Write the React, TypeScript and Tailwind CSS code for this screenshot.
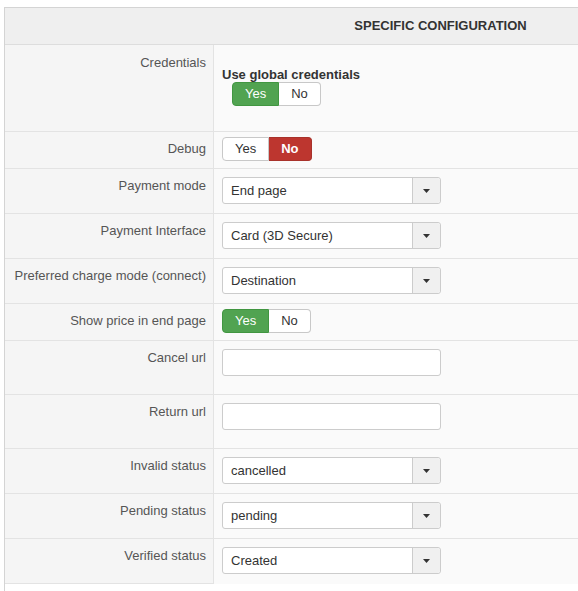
import React from "react";

type Field =
  | { kind: "toggle"; label: string; value: boolean }
  | { kind: "select"; label: string; value: string }
  | { kind: "input"; label: string };

const fields: Field[] = [
  { kind: "toggle", label: "Debug", value: false },
  { kind: "select", label: "Payment mode", value: "End page" },
  { kind: "select", label: "Payment Interface", value: "Card (3D Secure)" },
  { kind: "select", label: "Preferred charge mode (connect)", value: "Destination" },
  { kind: "toggle", label: "Show price in end page", value: true },
  { kind: "input", label: "Cancel url" },
  { kind: "input", label: "Return url" },
  { kind: "select", label: "Invalid status", value: "cancelled" },
  { kind: "select", label: "Pending status", value: "pending" },
  { kind: "select", label: "Verified status", value: "Created" },
];

function YesNo({ on }: { on: boolean }) {
  return (
    <div className="flex w-max text-[13px] leading-[22px]">
      <span
        className={`px-3 rounded-l-[4px] border ${
          on ? "bg-[#51a351] border-[#419641] text-white" : "bg-white border-[#c8c8c8] text-[#333]"
        }`}
      >
        Yes
      </span>
      <span
        className={`px-3 rounded-r-[4px] border border-l-0 ${
          !on ? "bg-[#bd362f] border-[#a8322b] text-white font-bold" : "bg-white border-[#c8c8c8] text-[#333]"
        }`}
      >
        No
      </span>
    </div>
  );
}

function Dropdown({ value }: { value: string }) {
  return (
    <div className="flex w-[219px] h-[27px] bg-white border border-[#cccccc] rounded-[3px] text-[13px] text-[#333]">
      <span className="flex-1 pl-2 leading-[26px]">{value}</span>
      <span className="w-[28px] flex items-center justify-center bg-[#f0f0f0] border-l border-[#cccccc] rounded-r-[3px]">
        <svg width="7" height="4" viewBox="0 0 7 4">
          <path d="M0 0h7L3.5 4z" fill="#333" />
        </svg>
      </span>
    </div>
  );
}

function Label({ children, pt = "pt-[8px]", last = false }: { children: React.ReactNode; pt?: string; last?: boolean }) {
  return (
    <div
      className={`w-[209px] shrink-0 bg-[#f5f5f5] border-r border-[#e3e3e3] pr-[7px] text-right text-[13px] leading-[18px] text-[#555] ${pt} ${
        last ? "border-b" : ""
      }`}
    >
      {children}
    </div>
  );
}

export default function App() {
  return (
    <div
      className="w-[578px] h-[591px] overflow-hidden bg-white pt-[7px] pl-[4px]"
      style={{ fontFamily: '"Liberation Sans", Arial, sans-serif' }}
    >
      <div className="w-[872px] border-l border-t border-[#d4d4d4]">
        {/* section header */}
        <div className="h-[37px] bg-[#efefef] border-b border-[#dddddd] flex items-center justify-center">
          <span className="text-[13px] font-bold text-[#333] uppercase">Specific configuration</span>
        </div>

        {/* credentials */}
        <div className="flex h-[87px] border-b border-[#e3e3e3] bg-[#fafafa]">
          <Label pt="pt-[9px]">Credentials</Label>
          <div className="pl-2 pt-[22px]">
            <div className="text-[13px] font-bold text-[#333] leading-[15px]">Use global credentials</div>
            <div className="ml-[10px]">
              <YesNo on={true} />
            </div>
          </div>
        </div>

        {fields.map((f, i) => {
          const last = i === fields.length - 1;
          const h = f.kind === "toggle" ? "h-[37px]" : f.kind === "input" ? "h-[54px]" : "h-[45px]";
          return (
            <div
              key={f.label}
              className={`flex ${h} bg-[#fafafa] ${last ? "" : "border-b border-[#e3e3e3]"}`}
            >
              <Label last={last}>{f.label}</Label>
              <div className={`pl-2 ${f.kind === "toggle" ? "pt-[5px]" : "pt-[8px]"}`}>
                {f.kind === "toggle" && <YesNo on={f.value} />}
                {f.kind === "select" && <Dropdown value={f.value} />}
                {f.kind === "input" && (
                  <div className="w-[219px] h-[27px] bg-white border border-[#cccccc] rounded-[3px]" />
                )}
              </div>
            </div>
          );
        })}

        <div className="h-[20px] bg-white" />
      </div>
    </div>
  );
}
